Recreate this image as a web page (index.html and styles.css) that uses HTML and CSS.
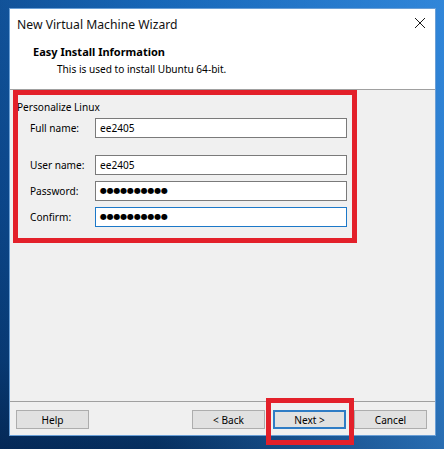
FILE: index.html
```html
<!DOCTYPE html>
<html>
<head>
<meta charset="utf-8">
<link rel="stylesheet" href="styles.css">
</head>
<body>
<div class="desktop">
  <div class="dialog">
    <div class="titlebar">
      <span class="title">New Virtual Machine Wizard</span>
      <svg class="close" width="12" height="12" viewBox="0 0 12 12"><path d="M1 1 L11 11 M11 1 L1 11" stroke="#1a1a1a" stroke-width="1" fill="none"/></svg>
    </div>
    <div class="header">
      <div class="h-title">Easy Install Information</div>
      <div class="h-sub">This is used to install Ubuntu 64-bit.</div>
    </div>
    <div class="content">
      <div class="group">
        <div class="group-title">Personalize Linux</div>
        <div class="row first"><span class="label">Full name:</span><div class="input">ee2405</div></div>
        <div class="row gap"><span class="label">User name:</span><div class="input">ee2405</div></div>
        <div class="row"><span class="label">Password:</span><div class="input dots">●●●●●●●●●●</div></div>
        <div class="row"><span class="label">Confirm:</span><div class="input dots focus">●●●●●●●●●●</div></div>
      </div>
      <div class="annot annot-group"></div>
    </div>
    <div class="footer">
      <button class="btn">Help</button>
      <div class="spacer"></div>
      <button class="btn">&lt; Back</button>
      <button class="btn default">Next &gt;</button>
      <button class="btn">Cancel</button>
      <div class="annot annot-next"></div>
    </div>
  </div>
</div>
</body>
</html>
```

FILE: styles.css
```css
html, body {
  margin: 0;
  padding: 0;
}
body {
  width: 444px;
  height: 449px;
  overflow: hidden;
  font-family: "Noto Sans", "DejaVu Sans", sans-serif;
  background:
    linear-gradient(90deg, rgba(0,20,60,0.25) 0%, rgba(0,0,0,0) 35%, rgba(70,160,245,0.55) 100%),
    linear-gradient(180deg, #1767b8 0%, #0f56a2 45%, #0a4584 80%, #062f5f 100%);
}
.desktop {
  padding: 8px 0 0 9px;
}
.dialog {
  width: 427px;
  height: 428px;
  box-sizing: border-box;
  border: 1px solid #6a9fd6;
  background: #f0f0f0;
  display: flex;
  flex-direction: column;
}
.titlebar {
  height: 30px;
  background: #fff;
  display: flex;
  align-items: center;
  justify-content: space-between;
  padding: 0 9px 0 7px;
}
.title {
  font-size: 12.2px;
  color: #111;
}
.close {
  display: block;
  margin-top: -2px;
}
.header {
  background: #fff;
  border-bottom: 1px solid #a0a0a0;
  padding: 5px 0 0 23px;
  box-sizing: border-box;
  height: 51px;
}
.h-title {
  font-size: 11px;
  font-weight: bold;
  line-height: 16px;
  color: #000;
}
.h-sub {
  font-size: 10.1px;
  line-height: 16px;
  margin: 1px 0 0 24px;
  color: #000;
}
.content {
  position: relative;
  flex: 1;
  border-bottom: 1px solid #a0a0a0;
  padding: 9px 0 0 7px;
}
.group-title {
  font-size: 10.1px;
  line-height: 16px;
  color: #000;
}
.row {
  display: flex;
  align-items: center;
  height: 20px;
  margin-top: 6px;
  padding-left: 13px;
}
.row.first {
  margin-top: 3px;
}
.row.gap {
  margin-top: 17px;
}
.label {
  width: 65px;
  font-size: 10.1px;
  color: #000;
}
.input {
  width: 252px;
  height: 20px;
  box-sizing: border-box;
  border: 1px solid #7a7a7a;
  background: #fff;
  font-size: 10.1px;
  line-height: 18px;
  padding-left: 4px;
  color: #000;
}
.input.dots {
  font-family: "DejaVu Sans", sans-serif;
  font-size: 8px;
  letter-spacing: -0.2px;
}
.input.focus {
  border-color: #1c78c8;
}
.footer {
  position: relative;
  height: 33px;
  display: flex;
  align-items: flex-start;
  gap: 8px;
  padding: 8px 8px 0 6px;
  box-sizing: border-box;
}
.spacer {
  flex: 1;
}
.btn {
  width: 73px;
  height: 19px;
  box-sizing: border-box;
  border: 1px solid #adadad;
  background: #e1e1e1;
  font-family: "Noto Sans", sans-serif;
  font-size: 10.1px;
  color: #000;
  padding: 0;
  line-height: 16px;
}
.btn.default {
  border: 2px solid #2f7cc5;
}
.annot {
  position: absolute;
  border: 5px solid #e3202a;
  box-sizing: border-box;
}
.annot-group {
  left: 3px;
  top: 0;
  width: 344px;
  height: 153px;
}
.annot-next {
  left: 256px;
  top: -4px;
  width: 88px;
  height: 47px;
}
```
